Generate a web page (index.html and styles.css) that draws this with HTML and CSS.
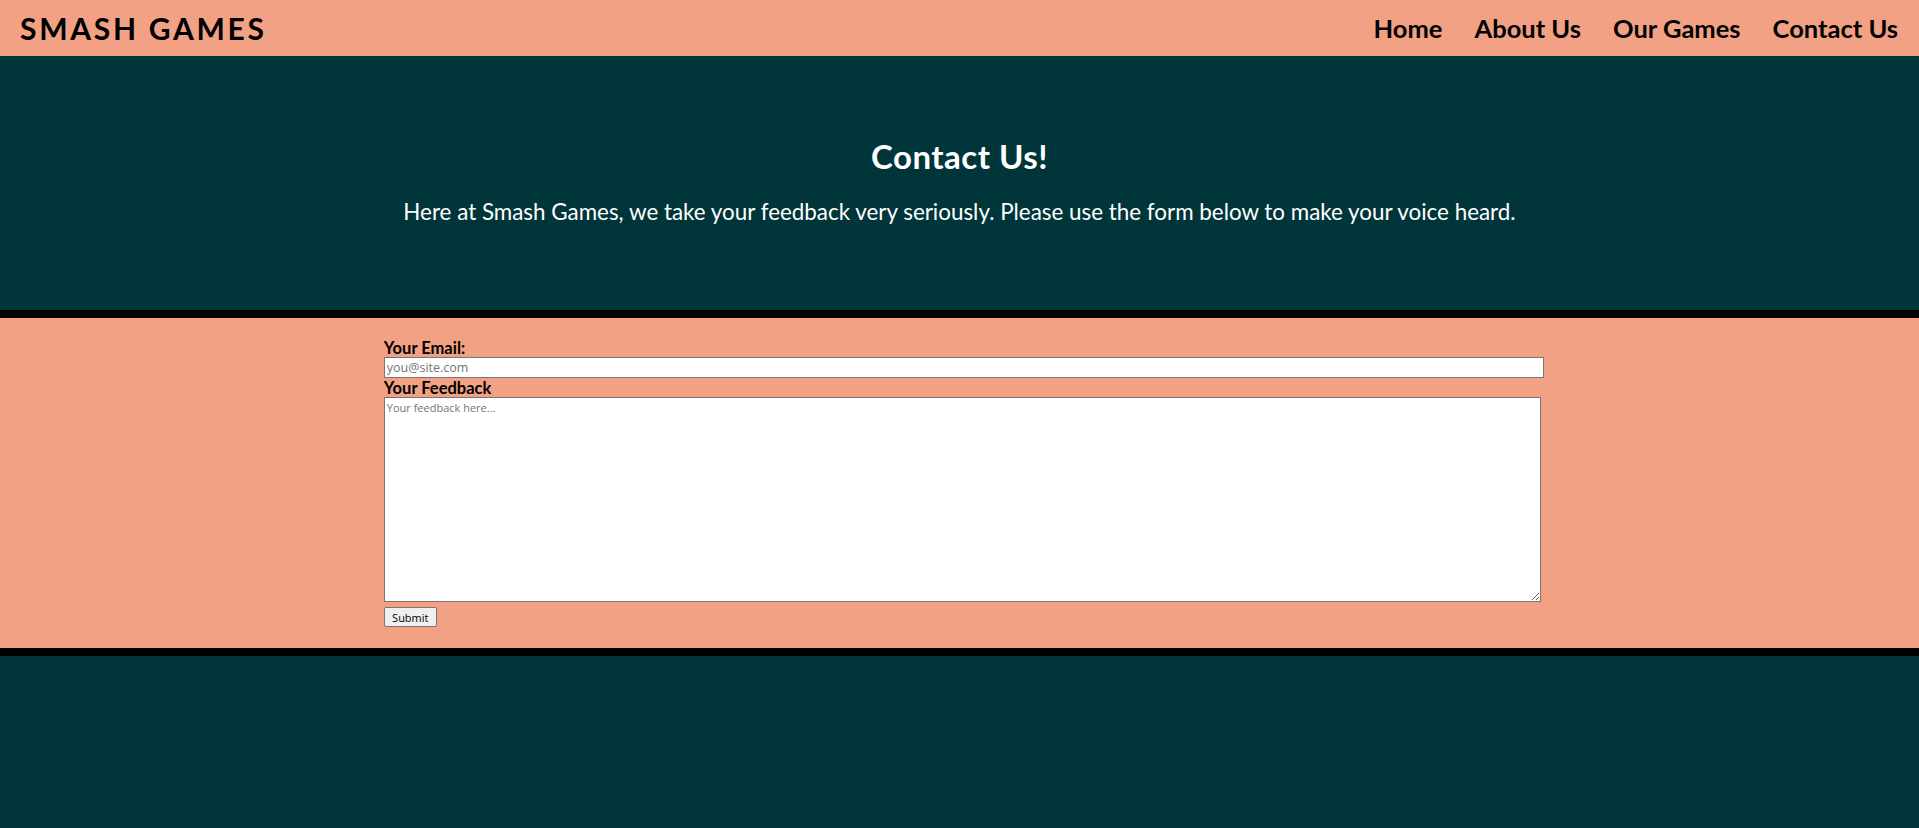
FILE: index.html
```html
<!DOCTYPE html>
<html lang="en">
<head>
<meta charset="utf-8">
<title>Smash Games - Contact Us</title>
<link rel="stylesheet" href="styles.css">
</head>
<body>
<header class="site-header">
  <div class="logo">SMASH GAMES</div>
  <nav class="nav">
    <a href="#" class="nav-link">Home</a>
    <a href="#" class="nav-link">About Us</a>
    <a href="#" class="nav-link">Our Games</a>
    <a href="#" class="nav-link">Contact Us</a>
  </nav>
</header>
<section class="hero">
  <h1 class="hero-title">Contact Us!</h1>
  <p class="hero-text">Here at Smash Games, we take your feedback very seriously. Please use the form below to make your voice heard.</p>
</section>
<section class="form-section">
  <form class="contact-form">
    <label class="form-label" for="email">Your Email:</label>
    <input class="form-input" id="email" type="email" placeholder="you@site.com">
    <label class="form-label" for="feedback">Your Feedback</label>
    <textarea class="form-textarea" id="feedback" placeholder="Your feedback here..."></textarea>
    <button class="form-submit" type="button">Submit</button>
  </form>
</section>
</body>
</html>
```

FILE: styles.css
```css
html, body {
  margin: 0;
  padding: 0;
}
body {
  background: #00363a;
  min-height: 828px;
  font-family: Lato, "Open Sans", sans-serif;
}
.site-header {
  height: 56px;
  background: #f2a184;
  display: flex;
  align-items: center;
  justify-content: space-between;
  padding: 0 21px 0 20px;
}
.logo {
  font-weight: 700;
  font-size: 30px;
  color: #000;
  letter-spacing: 2.7px;
}
.nav {
  display: flex;
  gap: 32px;
}
.nav-link {
  color: #000;
  text-decoration: none;
  font-weight: 700;
  font-size: 25.5px;
}
.hero {
  padding: 82px 0 86px;
  text-align: center;
  color: #fff;
  border-bottom: 8px solid #000;
}
.hero-title {
  margin: 0 0 24px;
  font-size: 33px;
  line-height: 37px;
  font-weight: 700;
  letter-spacing: 0.5px;
}
.hero-text {
  margin: 0;
  font-size: 22.4px;
  line-height: 25px;
}
.form-section {
  background: #f2a184;
  border-bottom: 8px solid #000;
  padding: 21px 0;
}
.contact-form {
  margin-left: 20%;
  width: calc(60% + 9px);
  display: flex;
  flex-direction: column;
  align-items: flex-start;
}
.form-label {
  font-weight: 700;
  font-size: 16.5px;
  line-height: 18px;
  color: #000;
}
.form-input {
  box-sizing: border-box;
  width: 100%;
  height: 21px;
  margin: 0 0 1px;
  padding: 1px 2px;
  border: 1px solid #767676;
  font-family: "Open Sans", sans-serif;
  font-size: 12.5px;
}
.form-textarea {
  box-sizing: border-box;
  width: calc(100% - 3px);
  height: 205px;
  margin: 0;
  padding: 2px;
  border: 1px solid #767676;
  font-family: "Open Sans", sans-serif;
  font-size: 11px;
  resize: both;
}
.form-input::placeholder,
.form-textarea::placeholder {
  color: #757575;
}
.form-submit {
  margin-top: 5px;
  height: 20px;
  width: 53px;
  padding: 0;
  background: #efefef;
  border: 1px solid #767676;
  border-radius: 2px;
  font-family: "Open Sans", sans-serif;
  font-size: 11px;
  color: #000;
}
```
